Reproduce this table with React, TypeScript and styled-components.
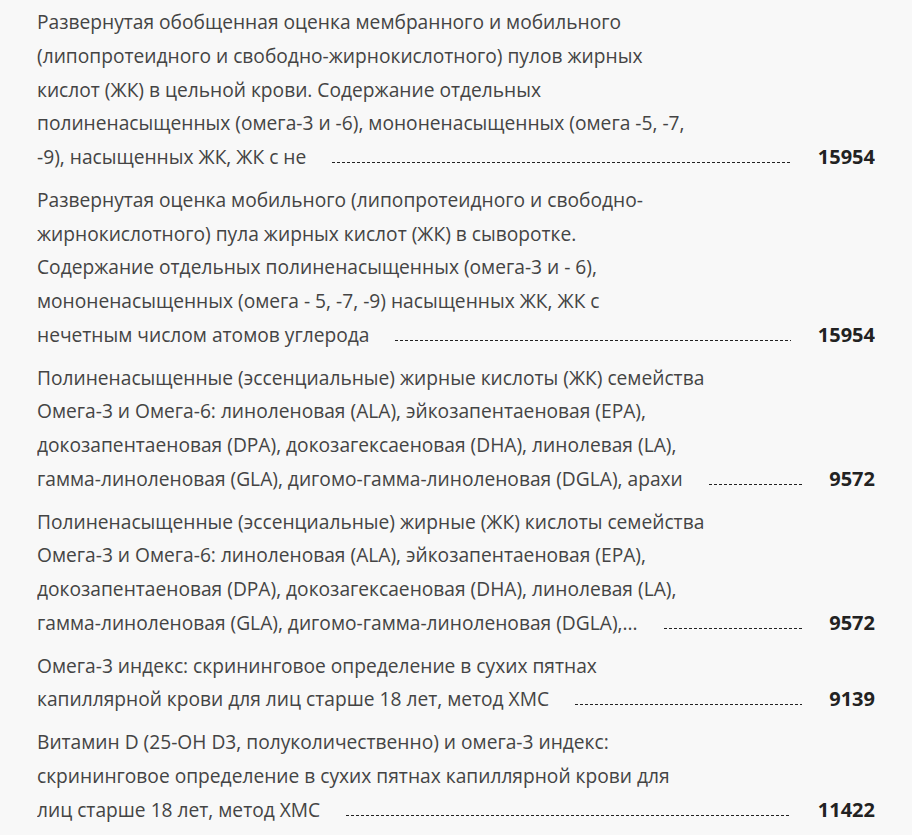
import styled, { createGlobalStyle } from 'styled-components'

const GlobalStyle = createGlobalStyle`
  body {
    margin: 0;
    background: #f8f8f8;
    font-family: 'Open Sans', 'Noto Sans', sans-serif;
  }
`

const PAGE_BG = '#f8f8f8'

type Service = {
  name: string
  price: number
}

const services: Service[] = [
  {
    name: 'Развернутая обобщенная оценка мембранного и мобильного (липопротеидного и свободно-жирнокислотного) пулов жирных кислот (ЖК) в цельной крови. Содержание отдельных полиненасыщенных (омега-3 и -6), мононенасыщенных (омега -5, -7, -9), насыщенных ЖК, ЖК с не',
    price: 15954,
  },
  {
    name: 'Развернутая оценка мобильного (липопротеидного и свободно-жирнокислотного) пула жирных кислот (ЖК) в сыворотке. Содержание отдельных полиненасыщенных (омега-3 и - 6), мононенасыщенных (омега - 5, -7, -9) насыщенных ЖК, ЖК с нечетным числом атомов углерода',
    price: 15954,
  },
  {
    name: 'Полиненасыщенные (эссенциальные) жирные кислоты (ЖК) семейства Омега-3 и Омега-6: линоленовая (ALA), эйкозапентаеновая (EPA), докозапентаеновая (DPA), докозагексаеновая (DHA), линолевая (LA), гамма-линоленовая (GLA), дигомо-гамма-линоленовая (DGLA), арахи',
    price: 9572,
  },
  {
    name: 'Полиненасыщенные (эссенциальные) жирные (ЖК) кислоты семейства Омега-3 и Омега-6: линоленовая (ALA), эйкозапентаеновая (EPA), докозапентаеновая (DPA), докозагексаеновая (DHA), линолевая (LA), гамма-линоленовая (GLA), дигомо-гамма-линоленовая (DGLA),...',
    price: 9572,
  },
  {
    name: 'Омега-3 индекс: скрининговое определение в сухих пятнах капиллярной крови для лиц старше 18 лет, метод ХМС',
    price: 9139,
  },
  {
    name: 'Витамин D (25-OH D3, полуколичественно) и омега-3 индекс: скрининговое определение в сухих пятнах капиллярной крови для лиц старше 18 лет, метод ХМС',
    price: 11422,
  },
]

const PriceList = styled.ul`
  list-style: none;
  margin: 0;
  padding: 5px 37px 0;
  display: flex;
  flex-direction: column;
  gap: 9px;
`

const Row = styled.li`
  display: flex;
  align-items: last baseline;
  overflow: hidden;
`

// the name takes what the price leaves, less a fixed gutter the leader runs through
const Name = styled.p`
  flex: 1 1 0;
  min-width: 0;
  margin: 0 97.5px 0 0;
  font-size: 19.2px;
  line-height: 33.75px;
  color: #444;
`

// empty inline box glued to the last word, its dashed background runs under the price
const Leader = styled.span`
  margin-left: 26px;
  padding-right: 1200px;
  background-image: linear-gradient(to right, #222 60%, transparent 60%);
  background-size: 5px 1px;
  background-repeat: repeat-x;
  background-position: 0 calc(100% - 7px);
`

const Price = styled.span`
  position: relative;
  flex: none;
  padding-left: 27px;
  background: ${PAGE_BG};
  font-size: 20px;
  font-weight: 700;
  color: #222;
`

export default function App() {
  return (
    <>
      <GlobalStyle />
      <PriceList>
        {services.map((s, i) => (
          <Row key={i}>
            <Name>
              {s.name}<Leader />
            </Name>
            <Price>{s.price}</Price>
          </Row>
        ))}
      </PriceList>
    </>
  )
}
